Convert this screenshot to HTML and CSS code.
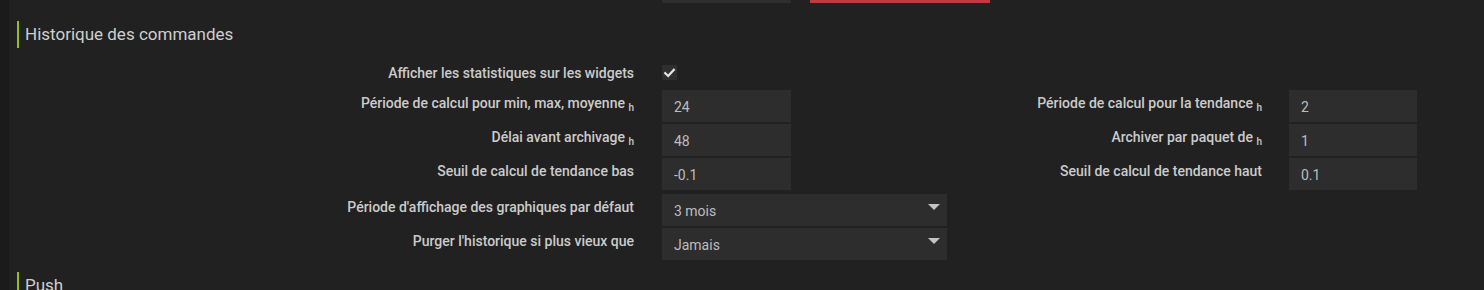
FILE: index.html
```html
<!DOCTYPE html>
<html lang="fr">
<head>
<meta charset="utf-8">
<title>Historique des commandes</title>
<link rel="stylesheet" href="styles.css">
</head>
<body>
<div class="page">
  <div class="strip"></div>
  <div class="main">
    <div class="topbar"><span class="top-input"></span><span class="top-btn"></span></div>
    <div class="legend">Historique des commandes</div>
    <div class="form">
      <div class="row row-check">
        <label class="lbl lbl-l">Afficher les statistiques sur les widgets</label>
        <div class="fld fld-l"><span class="check"><svg width="16" height="16" viewBox="0 0 16 16"><path d="M3.5 8.2 L6.6 11.2 L12.6 4.6" fill="none" stroke="#e6e6e6" stroke-width="2.4" stroke-linecap="square"/></svg></span></div>
      </div>
      <div class="row">
        <label class="lbl lbl-l">Période de calcul pour min, max, moyenne <sub>h</sub></label>
        <div class="fld fld-l"><div class="input">24</div></div>
        <label class="lbl lbl-r">Période de calcul pour la tendance <sub>h</sub></label>
        <div class="fld fld-r"><div class="input">2</div></div>
      </div>
      <div class="row">
        <label class="lbl lbl-l">Délai avant archivage <sub>h</sub></label>
        <div class="fld fld-l"><div class="input">48</div></div>
        <label class="lbl lbl-r">Archiver par paquet de <sub>h</sub></label>
        <div class="fld fld-r"><div class="input">1</div></div>
      </div>
      <div class="row">
        <label class="lbl lbl-l">Seuil de calcul de tendance bas</label>
        <div class="fld fld-l"><div class="input">-0.1</div></div>
        <label class="lbl lbl-r">Seuil de calcul de tendance haut</label>
        <div class="fld fld-r"><div class="input">0.1</div></div>
      </div>
      <div class="row row-sel">
        <label class="lbl lbl-l">Période d'affichage des graphiques par défaut</label>
        <div class="fld fld-l"><div class="select">3 mois<span class="caret"></span></div></div>
      </div>
      <div class="row">
        <label class="lbl lbl-l">Purger l'historique si plus vieux que</label>
        <div class="fld fld-l"><div class="select">Jamais<span class="caret"></span></div></div>
      </div>
    </div>
    <div class="legend legend-push">Push</div>
  </div>
</div>
</body>
</html>
```
FILE: styles.css
```css
html, body {
  margin: 0;
  padding: 0;
  background: #212121;
  height: 290px;
  overflow: hidden;
}
.page {
  display: flex;
  font-family: Roboto, "Liberation Sans", sans-serif;
  color: #c9c9c9;
  height: 290px;
}
.strip {
  width: 9px;
  flex: 0 0 9px;
  background: #1b1b1b;
}
.main {
  flex: 1;
  background: #212121;
}
.topbar {
  display: flex;
  height: 3px;
  padding-left: 653px;
  gap: 19px;
}
.top-input {
  width: 129px;
  background: #2e2e2e;
}
.top-btn {
  width: 180px;
  background: #bf393f;
}
.legend {
  margin: 18px 0 0 8px;
  border-left: 2px solid #93c01f;
  padding-left: 6px;
  height: 27px;
  line-height: 27px;
  font-size: 17px;
  color: #cfcfcf;
}
.legend-push {
  margin-top: 12px;
}
.form {
  margin-top: 10px;
}
.row {
  display: flex;
  height: 32px;
  margin-bottom: 2px;
}
.row-check {
  height: 30px;
}
.row-sel {
  margin-top: 4px;
}
.lbl {
  box-sizing: border-box;
  text-align: right;
  font-size: 14px;
  font-weight: 500;
  line-height: 16px;
  padding-top: 5px;
  color: #cbcbcb;
}
.row-check .lbl {
  padding-top: 7px;
}
.lbl sub {
  font-size: 10px;
  vertical-align: -3px;
  line-height: 0;
}
.lbl-l {
  width: 653px;
  padding-right: 28px;
}
.fld-l {
  width: 285px;
}
.lbl-r {
  width: 342px;
  padding-right: 27px;
}
.fld-r {
  width: 128px;
}
.input {
  box-sizing: border-box;
  width: 129px;
  height: 32px;
  background: #2d2d2d;
  padding: 8px 12px 0;
  font-size: 14px;
  line-height: 18px;
  color: #bdbdbd;
}
.fld-r .input {
  width: 128px;
}
.select {
  position: relative;
  box-sizing: border-box;
  width: 285px;
  height: 32px;
  background: #2d2d2d;
  padding: 8px 12px 0;
  font-size: 14px;
  line-height: 18px;
  color: #bdbdbd;
}
.caret {
  position: absolute;
  right: 7px;
  top: 10px;
  width: 0;
  height: 0;
  border-left: 6px solid transparent;
  border-right: 6px solid transparent;
  border-top: 6px solid #c4c4c4;
}
.check {
  display: flex;
  align-items: center;
  justify-content: center;
  width: 15px;
  height: 15px;
  margin-top: 7px;
  background: #2f2f2f;
}
```
